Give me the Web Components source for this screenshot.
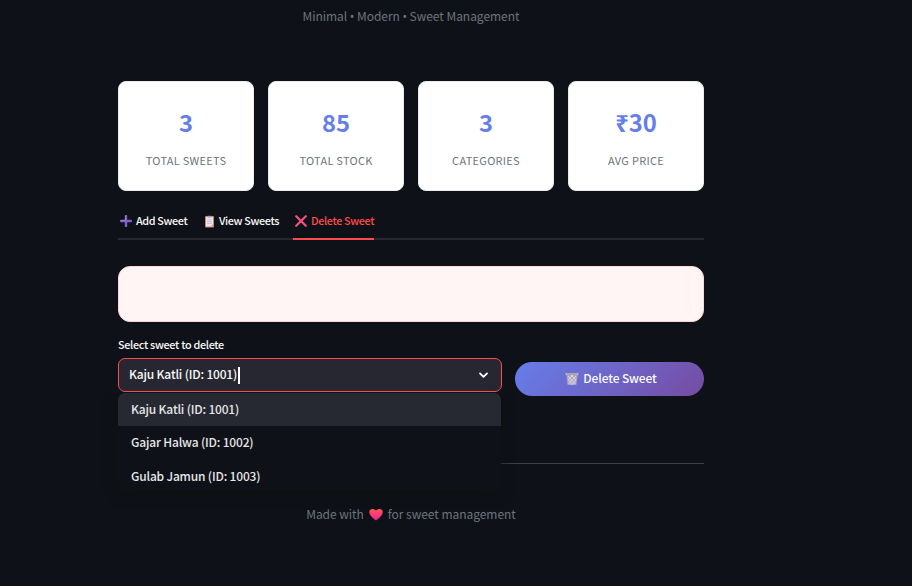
<!DOCTYPE html>
<html lang="en">
<head>
<meta charset="utf-8">
<title>Sweet Management</title>
<style>
html,body{margin:0;height:100%;background:#0e1117;overflow:hidden}
body{font-family:"Noto Sans CJK SC","Noto Sans",sans-serif;color:#fafafa}
</style>
</head>
<body>
<sweet-app></sweet-app>
<script>
const define = (name, html) => customElements.define(name, class extends HTMLElement {
  constructor() {
    super();
    const t = document.createElement('template');
    t.innerHTML = html;
    this.attachShadow({mode: 'open'}).append(t.content.cloneNode(true));
  }
});

define('stat-card', `<style>
:host{display:flex;flex-direction:column;align-items:center;box-sizing:border-box;height:110px;padding-top:23px;background:#fff;border:1px solid #e9ecef;border-radius:8px}
.v{font-size:23.8px;font-weight:700;line-height:34px;color:#667eea;height:34px}
.l{font-size:11px;line-height:18px;letter-spacing:.27px;color:#6c757d;margin-top:12px;white-space:nowrap}
</style><div class="v"><slot name="value"></slot></div><div class="l"><slot></slot></div>`);

define('tab-item', `<style>
:host{display:flex;align-items:center;box-sizing:border-box;height:36px;padding:0 0 2px 2px;gap:4px;font-size:10.8px;letter-spacing:-.35px;font-weight:500;line-height:18px;white-space:nowrap}
:host([active]){color:#ff4b4b;box-shadow:inset 0 -2px #ff4b4b}
::slotted(svg){flex:none;display:block}
span{padding-bottom:2px}
</style><slot name="icon"></slot><span><slot></slot></span>`);

define('tab-bar', `<style>
:host{display:flex;gap:14px;height:36px;box-shadow:inset 0 -2px #262730}
</style><slot></slot>`);

define('option-item', `<style>
:host{display:flex;align-items:center;box-sizing:border-box;height:33.5px;padding:0 0 1px 13px;font-size:12px;letter-spacing:-.18px;font-weight:500;line-height:20px;color:#e6e7e9}
:host([selected]){height:33px;background:#262931}
</style><span><slot></slot></span>`);

define('select-box', `<style>
:host{display:block;position:relative;width:384px}
.label{font-size:10.8px;letter-spacing:-.3px;font-weight:500;line-height:16px;height:22px}
.field{display:flex;align-items:center;box-sizing:border-box;height:34px;border:1px solid #ff4b4b;border-radius:7px;background:#262730;padding:0 12px 0 10px;font-size:12px;letter-spacing:-.18px;font-weight:500;line-height:20px}
.field span{padding-bottom:2px}
.caret{width:2px;height:17px;background:#fff;margin-left:1px}
svg{margin-left:auto}
.menu{position:absolute;left:0;top:57px;width:383px;height:98px;border-radius:7px;background:#0e1117;overflow:hidden;z-index:2}
.shade{position:absolute;left:0;top:57px;width:383px;height:98px;border-radius:7px;box-shadow:0 3px 13px rgba(16,16,16,.8);clip-path:inset(0 -30px -30px -30px);z-index:1}
</style>
<div class="label"><slot name="label"></slot></div>
<div class="field"><span><slot name="value"></slot></span><i class="caret"></i>
<svg width="11" height="10" viewBox="0 0 11 10" fill="none" stroke="#fff" stroke-width="1.8" stroke-linecap="round" stroke-linejoin="round"><path d="M2 3.4 5.5 6.8 9 3.4"/></svg></div>
<div class="shade"></div><div class="menu"><slot></slot></div>`);

define('gradient-button', `<style>
:host{display:flex;align-items:center;justify-content:center;gap:4px;box-sizing:border-box;padding-left:3px;width:189px;height:34px;border-radius:17px;background:linear-gradient(135deg,#667eea,#764ba2);font-size:12px;letter-spacing:-.12px;font-weight:500;line-height:20px;white-space:nowrap}
span{padding-bottom:2px}
</style><slot name="icon"></slot><span><slot></slot></span>`);

define('sweet-app', `<style>
:host{display:block;box-sizing:border-box;width:586px;margin-left:118px;padding-top:6px}
.tag,.foot{display:flex;justify-content:center;align-items:center;font-size:12px;line-height:20px;height:20px;color:#6c757d;letter-spacing:-.04px;white-space:pre}
.tag b{font-family:"Noto Sans",sans-serif;font-weight:400}
.stats{display:grid;grid-template-columns:repeat(4,136px);gap:14px;margin-top:55px}
tab-bar{margin-top:13px}
.alert{box-sizing:border-box;height:56px;margin-top:26px;border:1px solid #fed7d7;border-radius:12px;background:#fff5f5}
.row{display:flex;justify-content:space-between;align-items:flex-start;margin-top:14px}
gradient-button{margin-top:26px}
.rule{height:1px;background:#3d4044;margin-top:67px}
.foot{margin-top:40px}
.foot svg{margin:1px 5px 0}
</style>
<div class="tag"><span>Minimal <b>•</b> Modern <b>•</b> Sweet Management</span></div>
<div class="stats">
<stat-card><span slot="value">3</span>TOTAL SWEETS</stat-card>
<stat-card><span slot="value">85</span>TOTAL STOCK</stat-card>
<stat-card><span slot="value">3</span>CATEGORIES</stat-card>
<stat-card><span slot="value">₹30</span>AVG PRICE</stat-card>
</div>
<tab-bar>
<tab-item style="width:70px;box-sizing:border-box"><svg slot="icon" width="12" height="12" viewBox="0 0 12 12"><path d="M6 1v10M1 6h10" stroke="#8062c4" stroke-width="2.4" stroke-linecap="round"/><path d="M5.5 1v4.4H1" stroke="#a18bd2" stroke-width=".7" fill="none"/></svg>Add Sweet</tab-item>
<tab-item style="width:77px"><svg slot="icon" width="11" height="13" viewBox="0 0 11 13"><rect x="1" y="1" width="9" height="11.5" rx="1" fill="#c98264"/><path d="M2 2h7v9.5H2z" fill="#ece5f3"/><path d="M3.5 2V.8h4V2.6h-4z" fill="#aaa1bc"/><path d="M3 4.8h5M3 6.6h5M3 8.4h5" stroke="#bfb4cc" stroke-width=".7"/><path d="M6.5 11.5 9 9v2.5z" fill="#b7a8c6"/></svg>View Sweets</tab-item>
<tab-item active style="width:81px"><svg slot="icon" width="12" height="12" viewBox="0 0 12 12"><path d="M1.2 1.2 10.8 10.8M10.8 1.2 1.2 10.8" stroke="#f84f83" stroke-width="2.2" stroke-linecap="round"/></svg>Delete Sweet</tab-item>
</tab-bar>
<div class="alert"></div>
<div class="row">
<select-box><span slot="label">Select sweet to delete</span><span slot="value">Kaju Katli (ID: 1001)</span>
<option-item selected>Kaju Katli (ID: 1001)</option-item><option-item>Gajar Halwa (ID: 1002)</option-item><option-item>Gulab Jamun (ID: 1003)</option-item></select-box>
<gradient-button><svg slot="icon" width="14" height="14" viewBox="0 0 14 14"><path d="M1.2 2.2h11.6L11.4 13H2.6z" fill="#aaa3bd"/><path d="M3 4l7.5 8M6 3l5 5M3.5 8l4 4.5M11 4l-7.5 8M8 3 3 8M11 8l-4 4.5" stroke="#e2ddec" stroke-width=".9"/><path d="M.6 1h12.8v2.1H.6z" fill="#bdb9bd"/><path d="M2 2.1h10" stroke="#777181" stroke-width=".6"/></svg>Delete Sweet</gradient-button>
</div>
<div class="rule"></div>
<div class="foot"><span>Made with</span><svg width="14" height="13" viewBox="0 0 14 13"><defs><linearGradient id="h" x2="0" y2="1"><stop stop-color="#ff5a52"/><stop offset="1" stop-color="#f31b9b"/></linearGradient></defs><path d="M7 12.5C4.5 10.7.3 7.6.3 4.1.3.3 5 .1 7 2.6 9 .1 13.7.3 13.7 4.1 13.7 7.6 9.5 10.7 7 12.5z" fill="url(#h)"/></svg><span>for sweet management</span></div>
`);
</script>
</body>
</html>
